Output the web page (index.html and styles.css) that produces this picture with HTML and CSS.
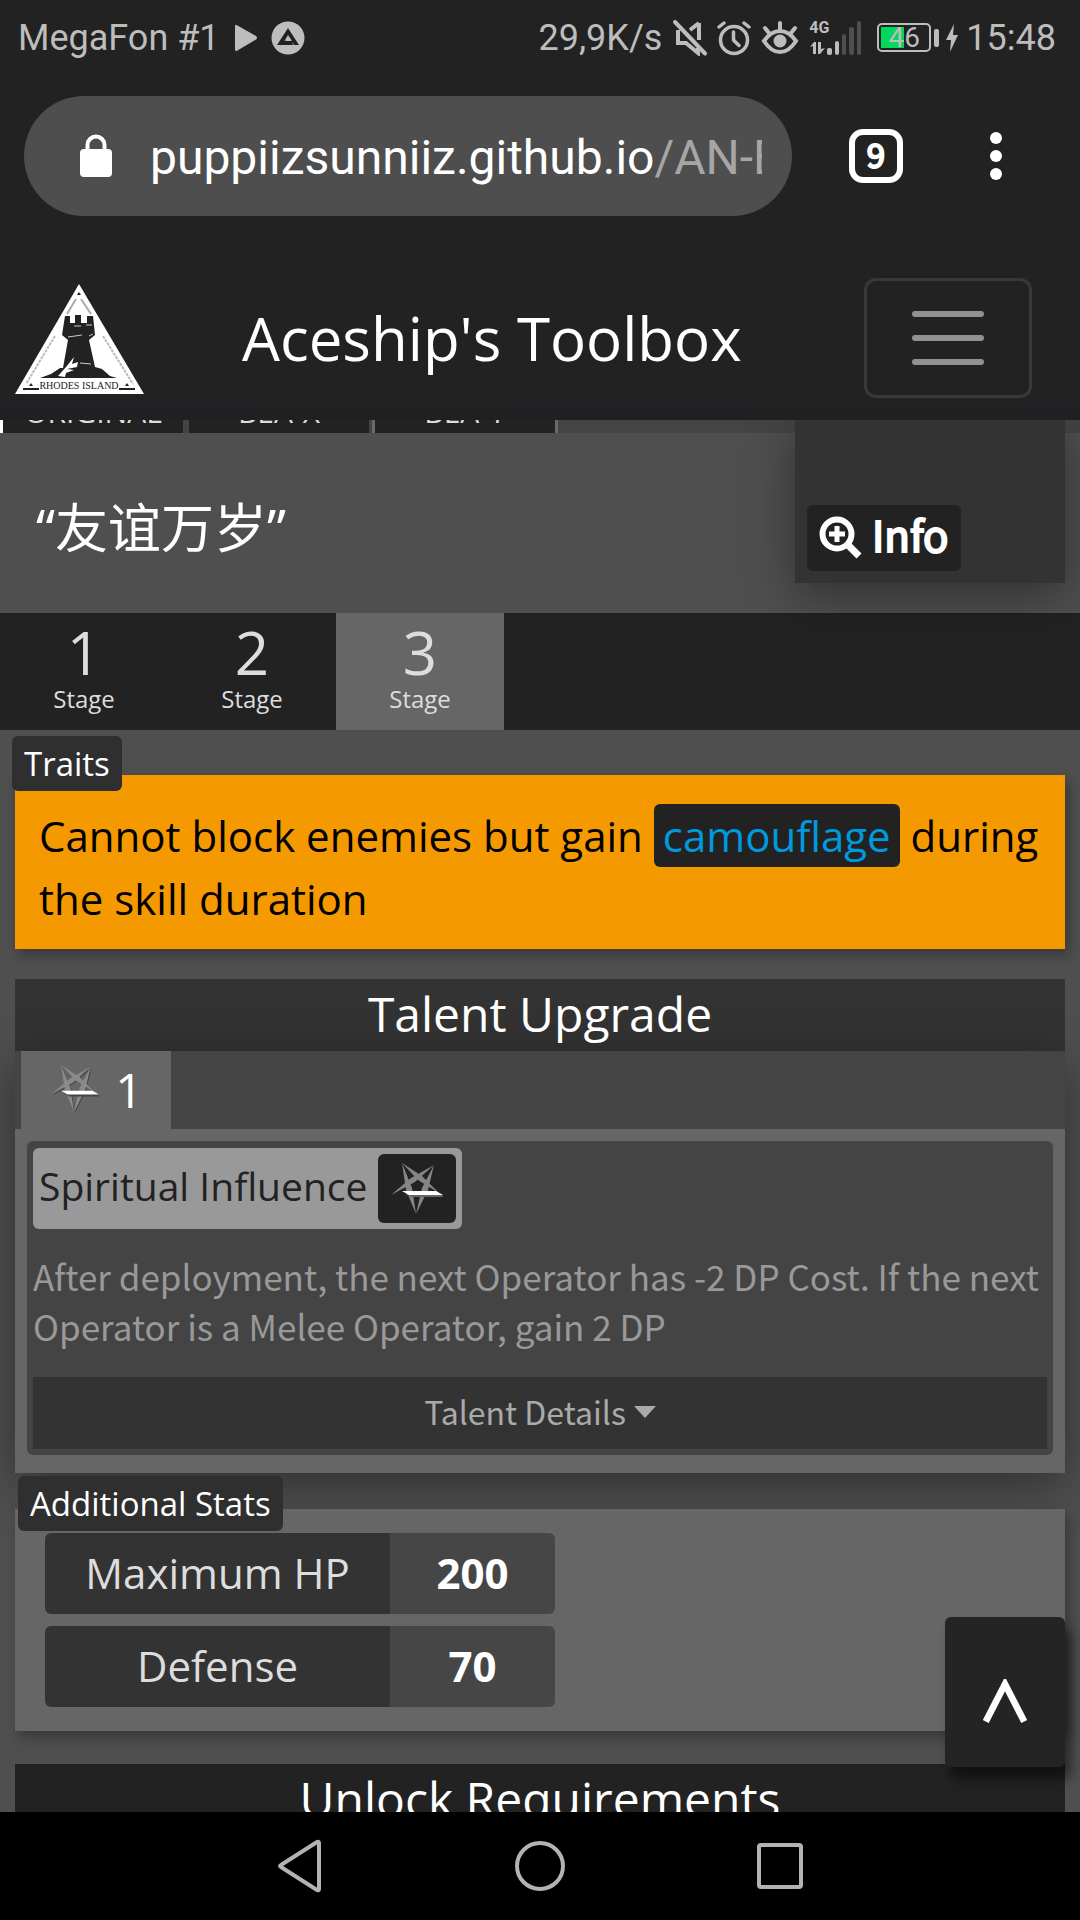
FILE: index.html
```
<!DOCTYPE html>
<html lang="en">
<head>
    <meta charset="UTF-8">
    <meta name="viewport" content="width=device-width, initial-scale=1.0">
    <title>Aceship's Toolbox</title>
    <link rel="stylesheet" href="styles.css">
</head>
<body>
    <!-- Phone status bar -->
    <div class="status-bar">
        <span class="carrier">MegaFon #1</span>
        <svg class="play" width="24" height="28" viewBox="0 0 24 28"><path d="M1 2.500Q1 0 3 1.300L22 12Q24 14 22 15.500L3 26.700Q1 27.500 1 25.500z" fill="#bdbdbd"/></svg>
        <svg class="app" width="34" height="34" viewBox="0 0 34 34">
            <circle cx="17" cy="17" r="16.500" fill="#bdbdbd"/>
            <path d="M17 7L28 24H23L19 17L14.500 20H21L22 24H6z" fill="#222"/>
            <path d="M17 14L20 18.500L13.500 20z" fill="#bdbdbd"/>
        </svg>
        <span class="speed">29,9K/s</span>
        <svg width="34" height="36" viewBox="0 0 34 36" fill="none" stroke="#bdbdbd" stroke-width="4">
            <path d="M2 2L32 33.500" stroke-linecap="round"/>
            <path d="M26 3V20M26 3L17 10M7 12H5V23H13L25 33V28"/>
        </svg>
        <svg class="alarm" width="34" height="36" viewBox="0 0 34 36" fill="none" stroke="#bdbdbd" stroke-width="3.500" stroke-linecap="round">
            <circle cx="17" cy="20" r="13.500"/>
            <path d="M16.500 12V20L22 25.500M2 7L7 3M32 7L27 3"/>
        </svg>
        <svg class="eye" width="38" height="36" viewBox="0 0 38 36" fill="none" stroke="#bdbdbd" stroke-width="4" stroke-linecap="round">
            <path d="M3 21Q10 11 19 11T35 21Q28 32 19 32T3 21zM19 3V10M4 8L8 13M34 8L30 13"/>
            <circle cx="19" cy="21" r="6.500" fill="#bdbdbd" stroke="none"/>
        </svg>
        <span class="signal">
            <span class="network">4G</span>
            <svg width="54" height="36" viewBox="0 0 54 36" fill="#bdbdbd">
                <path d="M1 27L5 22H7V34H4V26zM9 22H12V29L16 28L11 34H9z"/>
                <rect x="18" y="28" width="5" height="7" rx="2"/>
                <rect x="26" y="21" width="4" height="14" rx="2"/>
                <g fill="#4f4f4f">
                    <rect x="33" y="14" width="4" height="21" rx="2"/>
                    <rect x="40" y="7" width="5" height="28" rx="2"/>
                    <rect x="48" y="1" width="4" height="34" rx="2"/>
                </g>
            </svg>
        </span>
        <span class="battery"><span class="level" style="width: 46%;"></span><span class="percent">46</span></span>
        <svg class="bolt" width="12" height="28" viewBox="0 0 12 28"><path d="M8 0L0 16H5L4 28L12 11H7z" fill="#bdbdbd"/></svg>
        <span class="clock">15:48</span>
    </div>

    <!-- Browser toolbar -->
    <div class="browser-bar">
        <button class="address">
            <svg width="34" height="44" viewBox="0 0 34 44"><path d="M8.500 18V11a8.500 8.500 0 0 1 17 0V18" fill="none" stroke="#fff" stroke-width="4"/><rect x="1" y="15" width="32" height="28" rx="4" fill="#fff"/></svg>
            <span class="url">puppiizsunniiz.github.io<span class="path">/AN-EN-Tags</span></span>
        </button>
        <button class="tab-count">9</button>
        <button class="dots" aria-label="Menu">
            <svg width="12" height="48" viewBox="0 0 12 48" fill="#fff"><circle cx="6" cy="6" r="6"/><circle cx="6" cy="24" r="6"/><circle cx="6" cy="42" r="6"/></svg>
        </button>
    </div>

    <nav class="navbar">
        <a href="#" class="logo" aria-label="Home">
            <svg width="130" height="112" viewBox="0 0 130 112">
                <path d="M64 2L129 112H0z" fill="#fff"/>
                <path d="M64 10l2 3h-4zM16 101l2 3h-4zM112 101l2 3h-4z" fill="#222"/>
                <path d="M61 17L52 32M66 17L76 32" stroke="#aaa" stroke-width="2"/>
                <path d="M40 54L11 102M88 54L118 102" stroke="#bbb" stroke-width="2" stroke-dasharray="3 1"/>
                <path d="M50 34H55V41H60V33H66V41H72V34H78L80 53L74 58L80 85L87 87L95 94L102 96H25L36 92L45 86H48L53 58L47 53z" fill="#222"/>
                <path d="M53 55L67 53M59 44H66M71 43H77M74 54L78 52M65 81L76 82" stroke="#ccc" stroke-width="1"/>
                <path d="M59 75L57 82L63 80L62 85L52 87L59 88L51 91L50 95L43 94L51 85z" fill="#fff"/>
                <path d="M8 107H24M104 107H120" stroke="#222" stroke-width="2"/>
                <text x="64" y="107" text-anchor="middle" class="logo-text">RHODES ISLAND</text>
            </svg>
        </a>
        <h1>Aceship's Toolbox</h1>
        <button class="toggler" aria-label="Toggle navigation"><span></span><span></span><span></span></button>
    </nav>

    <main>
        <div class="skin-tabs">
            <button class="first">ORIGINAL</button>
            <button>BEA-X</button>
            <button class="last">BEA-Y</button>
        </div>

        <div class="info-card">
            <button>
                <svg width="43" height="44" viewBox="0 0 43 44" fill="none" stroke="#fff">
                    <circle cx="18" cy="18" r="14.500" stroke-width="6"/>
                    <path d="M29 29L40 40" stroke-width="7"/>
                    <path d="M18 10V26M10 18H26" stroke-width="5"/>
                </svg>
                <span>Info</span>
            </button>
        </div>

        <p class="quote">“友谊万岁”</p>

        <div class="stages">
            <button><b>1</b>Stage</button>
            <button><b>2</b>Stage</button>
            <button class="active"><b>3</b>Stage</button>
        </div>

        <section class="traits">
            <h3 class="tag">Traits</h3>
            <p>Cannot block enemies but gain <a href="#">camouflage</a> during the skill duration</p>
        </section>

        <section class="talent">
            <h2>Talent Upgrade</h2>
            <div class="talent-box">
                <div class="talent-tabs">
                    <button>
                        <svg width="48" height="48" viewBox="0 0 52 52">
                            <g fill="#454545" transform="translate(1 1)">
                                <path d="M11 0L31 13L48 30L27 17zM43 2L24 19L0 32L20 15zM11 0L21 25L25 51L15 27zM43 2L37 27L25 51L31 25z"/>
                            </g>
                            <path d="M11 0L31 13L48 30L27 17zM43 2L24 19L0 32L20 15zM11 0L21 25L25 51L15 27zM43 2L37 27L25 51L31 25z" fill="#8a8a8a"/>
                            <path d="M14 31H51L52 34H20z" fill="#444"/>
                            <path d="M11 28H45L52 32H18z" fill="#fff"/>
                        </svg>
                        1
                    </button>
                </div>
                <div class="talent-panel">
                    <div class="talent-inner">
                        <div class="talent-name">
                            <span>Spiritual Influence</span>
                            <div class="talent-icon">
                                <svg width="52" height="52" viewBox="0 0 52 52">
                                    <path d="M11 0L31 13L48 30L27 17zM43 2L24 19L0 32L20 15zM11 0L21 25L25 51L15 27zM43 2L37 27L25 51L31 25z" fill="#858585"/>
                                    <path d="M14 31H51L52 34H20z" fill="#666"/>
                                    <path d="M11 28H45L52 32H18z" fill="#fff"/>
                                </svg>
                            </div>
                        </div>
                        <p>After deployment, the next Operator has -2 DP Cost. If the next Operator is a Melee Operator, gain 2 DP</p>
                        <button class="details">Talent Details <span class="caret"></span></button>
                    </div>
                </div>
            </div>
        </section>

        <section class="stats">
            <h3 class="tag">Additional Stats</h3>
            <table>
                <tr><th scope="row">Maximum HP</th><td>200</td></tr>
                <tr><th scope="row">Defense</th><td>70</td></tr>
            </table>
        </section>

        <section class="unlock">
            <h2>Unlock Requirements</h2>
        </section>

        <button class="to-top" aria-label="Back to top">∧</button>
    </main>

    <!-- Android navigation -->
    <div class="phone-nav">
        <button aria-label="Back"><svg width="56" height="56" viewBox="-4 0 56 56"><path d="M43 5V51Q43 53 41 52L5 29Q3 28 5 27L41 4Q43 3 43 5z"/></svg></button>
        <button aria-label="Home"><svg width="56" height="56" viewBox="0 0 56 56"><circle cx="28" cy="28" r="23"/></svg></button>
        <button aria-label="Recent apps"><svg width="56" height="56" viewBox="0 0 56 56"><rect x="7" y="7" width="42" height="42" rx="2"/></svg></button>
    </div>
</body>
</html>
```

FILE: styles.css
```
* {
    box-sizing: border-box;
}

body {
    margin: 0;
    height: 100vh;
    display: flex;
    flex-direction: column;
    overflow: hidden;
    background-color: #222;
    color: white;
    font-family: 'Open Sans', 'Noto Sans CJK SC', sans-serif;
}

h1, h2, h3, p {
    margin: 0;
    font-weight: normal;
}

button {
    margin: 0;
    padding: 0;
    border: none;
    background: none;
    color: inherit;
    font: inherit;
    cursor: pointer;
}

a {
    text-decoration: none;
}

svg {
    display: block;
    flex: none;
}

/* Status bar */
.status-bar {
    display: flex;
    align-items: center;
    height: 72px;
    padding: 3px 24px 0 18px;
    color: #bdbdbd;
    font-family: 'Roboto', sans-serif;
    font-size: 36px;
}

.play {
    margin-left: 14px;
}

.app {
    margin-left: 13px;
}

.speed {
    margin-left: auto;
    margin-right: 11px;
}

.alarm {
    margin-left: 10px;
}

.eye {
    margin: 0 10px;
}

.signal {
    position: relative;
    margin-right: 14px;
}

.network {
    position: absolute;
    top: -2px;
    left: 0;
    font-size: 16px;
    font-weight: bold;
    line-height: 20px;
}

.battery {
    position: relative;
    display: flex;
    align-items: center;
    justify-content: center;
    width: 54px;
    height: 29px;
    border: 2px solid #bdbdbd;
    border-radius: 5px;
    margin-right: 15px;
}

.battery::after {
    content: "";
    position: absolute;
    right: -10px;
    width: 5px;
    height: 18px;
    border-radius: 2px;
    background-color: #bdbdbd;
}

.level {
    position: absolute;
    left: 2px;
    top: 2px;
    bottom: 2px;
    background-color: #00d95a;
}

.percent {
    position: relative;
    font-size: 28px;
}

.clock {
    margin-left: 8px;
}

/* Browser toolbar */
.browser-bar {
    display: flex;
    align-items: center;
    height: 168px;
    padding: 0 78px 0 24px;
    font-family: 'Roboto', sans-serif;
}

.address {
    flex: 1;
    min-width: 0;
    display: flex;
    align-items: center;
    height: 120px;
    padding: 0 30px 0 55px;
    border-radius: 60px;
    background-color: #4e4e4e;
    text-align: left;
}

.url {
    flex: 1;
    margin-left: 37px;
    padding-top: 2px;
    overflow: hidden;
    white-space: nowrap;
    font-size: 48px;
}

.path {
    color: #a6a6a6;
}

.tab-count {
    width: 54px;
    height: 54px;
    margin-left: 57px;
    padding-bottom: 4px;
    border: 6px solid white;
    border-radius: 14px;
    font-family: 'Noto Sans CJK SC', sans-serif;
    font-size: 33px;
    line-height: 36px;
    -webkit-text-stroke: 2px white;
}

.dots {
    margin-left: 87px;
}

/* Navbar */
.navbar {
    display: flex;
    align-items: center;
    height: 180px;
    padding: 16px 48px 0 15px;
    background: linear-gradient(#222 80%, #1f2022);
}

.logo-text {
    font-family: 'Liberation Serif', serif;
    font-size: 10px;
    fill: #222;
}

.navbar h1 {
    margin: 0 auto 0 97px;
    font-size: 60px;
    line-height: 84px;
}

.toggler {
    display: flex;
    flex-direction: column;
    align-items: center;
    justify-content: center;
    gap: 18px;
    width: 168px;
    height: 120px;
    border: 3px solid #393939;
    border-radius: 12px;
}

.toggler span {
    width: 72px;
    height: 6px;
    border-radius: 3px;
    background-color: #919191;
}

/* Page content */
main {
    position: relative;
    flex: 1;
    min-height: 0;
    overflow: hidden;
    background-color: #4f4f4f;
}

.skin-tabs {
    display: flex;
    gap: 3px;
    height: 42px;
    margin-top: -29px;
    background-color: #444;
}

.skin-tabs button {
    width: 183px;
    border-left: 3px solid #444;
    background-color: #222;
    background-clip: padding-box;
    color: #ddd;
    font-size: 30px;
    line-height: 42px;
}

.skin-tabs .first {
    border-left-color: white;
}

.skin-tabs .last {
    width: 186px;
    border-left-color: #6a6a6a;
    border-right: 3px solid #6a6a6a;
}

.info-card {
    position: absolute;
    top: 0;
    right: 15px;
    width: 25%;
    padding: 85px 12px 12px;
    background-color: #333;
    box-shadow: 0 12px 48px rgba(0, 0, 0, 0.4);
}

.info-card button {
    display: flex;
    align-items: center;
    gap: 10px;
    height: 66px;
    padding: 0 12px;
    border-radius: 6px;
    background-color: #222;
    font-family: 'Noto Sans CJK SC', sans-serif;
    font-size: 42px;
    line-height: 54px;
    -webkit-text-stroke: 2px white;
}

.info-card span {
    padding-bottom: 8px;
}

.quote {
    height: 180px;
    padding: 59px 36px;
    font-family: 'Noto Sans', 'Noto Sans CJK SC', sans-serif;
    font-size: 53px;
    line-height: 72px;
}

.stages {
    display: flex;
    background-color: #222;
}

.stages button {
    width: 168px;
    height: 117px;
    padding-bottom: 5px;
    color: #ddd;
    font-size: 24px;
    line-height: 34px;
}

.stages b {
    display: block;
    font-size: 60px;
    font-weight: normal;
    line-height: 60px;
}

.stages .active {
    background-color: #666;
}

.tag {
    position: absolute;
    top: -39px;
    left: -3px;
    height: 55px;
    padding: 0 12px;
    border-radius: 6px;
    background-color: #2f2f2f;
    font-size: 33px;
    line-height: 55px;
}

.traits {
    position: relative;
    margin: 45px 15px 30px;
    padding: 29px 24px 19px;
    background-color: #f59900;
    box-shadow: 4px 6px 12px rgba(0, 0, 0, 0.3);
    color: black;
    font-size: 42px;
    line-height: 63px;
}

.traits a {
    display: inline-block;
    padding: 0 9px;
    border-radius: 6px;
    background-color: #222;
    color: #09d;
}

h2 {
    padding-bottom: 2px;
    background-color: #333;
    font-size: 48px;
    line-height: 70px;
    text-align: center;
}

.talent {
    margin: 0 15px 36px;
}

.talent-box {
    box-shadow: 0 12px 48px rgba(0, 0, 0, 0.4);
}

.talent-tabs {
    padding-left: 6px;
    background-color: #444;
}

.talent-tabs button {
    display: flex;
    align-items: center;
    justify-content: center;
    gap: 16px;
    width: 150px;
    height: 78px;
    padding: 0 0 2px 2px;
    background-color: #666;
    font-size: 48px;
}

.talent-panel {
    padding: 12px 12px 18px;
    background-color: #666;
}

.talent-inner {
    padding: 7px 6px 6px;
    border-radius: 6px;
    background-color: #444;
}

.talent-name {
    display: flex;
    align-items: center;
    gap: 11px;
    width: fit-content;
    height: 81px;
    padding: 6px;
    border-radius: 6px;
    background-color: #999;
    color: #222;
    font-size: 39px;
    line-height: 57px;
}

.talent-name span {
    padding-bottom: 7px;
}

.talent-icon {
    display: flex;
    align-items: center;
    justify-content: center;
    width: 78px;
    height: 69px;
    border-radius: 6px;
    background-color: #222;
}

.talent-inner p {
    margin: 22px 0 26px;
    color: #999;
    font-family: 'Noto Sans CJK SC', sans-serif;
    font-size: 35px;
    line-height: 50px;
}

.details {
    display: flex;
    align-items: center;
    justify-content: center;
    gap: 8px;
    width: 100%;
    height: 72px;
    padding-bottom: 4px;
    background-color: #333;
    color: #aaa;
    font-family: 'Noto Sans CJK SC', sans-serif;
    font-size: 32px;
}

.caret {
    margin-top: 2px;
    border: 11px solid transparent;
    border-top: 12px solid #aaa;
    border-bottom: none;
}

.stats {
    position: relative;
    margin: 0 15px 33px;
    padding: 12px 30px;
    background-color: #666;
    box-shadow: 4px 6px 12px rgba(0, 0, 0, 0.3);
}

.stats .tag {
    top: -33px;
    left: 3px;
}

.traits .tag {
    color: white;
}

.stats table {
    width: 510px;
    max-width: 100%;
    border-spacing: 0 12px;
    font-size: 42px;
    line-height: 63px;
    text-align: center;
}

.stats th {
    width: 345px;
    height: 81px;
    padding: 0 0 2px;
    border-radius: 6px 0 0 6px;
    background-color: #333;
    color: #ddd;
    font-weight: normal;
}

.stats td {
    padding: 0 0 2px;
    border-radius: 0 6px 6px 0;
    background-color: #464646;
    font-weight: bold;
}

.unlock {
    margin: 0 15px;
}

.unlock h2 {
    background-color: #222;
}

.to-top {
    position: absolute;
    right: 15px;
    bottom: 45px;
    width: 120px;
    height: 150px;
    padding-top: 12px;
    border-radius: 6px;
    background-color: #242424;
    box-shadow: 6px 12px 12px rgba(0, 0, 0, 0.5);
    font-family: 'Noto Sans CJK JP', sans-serif;
    font-size: 52px;
    -webkit-text-stroke: 3px white;
}

/* Android navigation */
.phone-nav {
    display: flex;
    align-items: center;
    justify-content: center;
    gap: 184px;
    height: 108px;
    background-color: black;
}

.phone-nav button {
    width: 56px;
}

.phone-nav svg {
    fill: none;
    stroke: #b3b3b3;
    stroke-width: 4;
}
```
